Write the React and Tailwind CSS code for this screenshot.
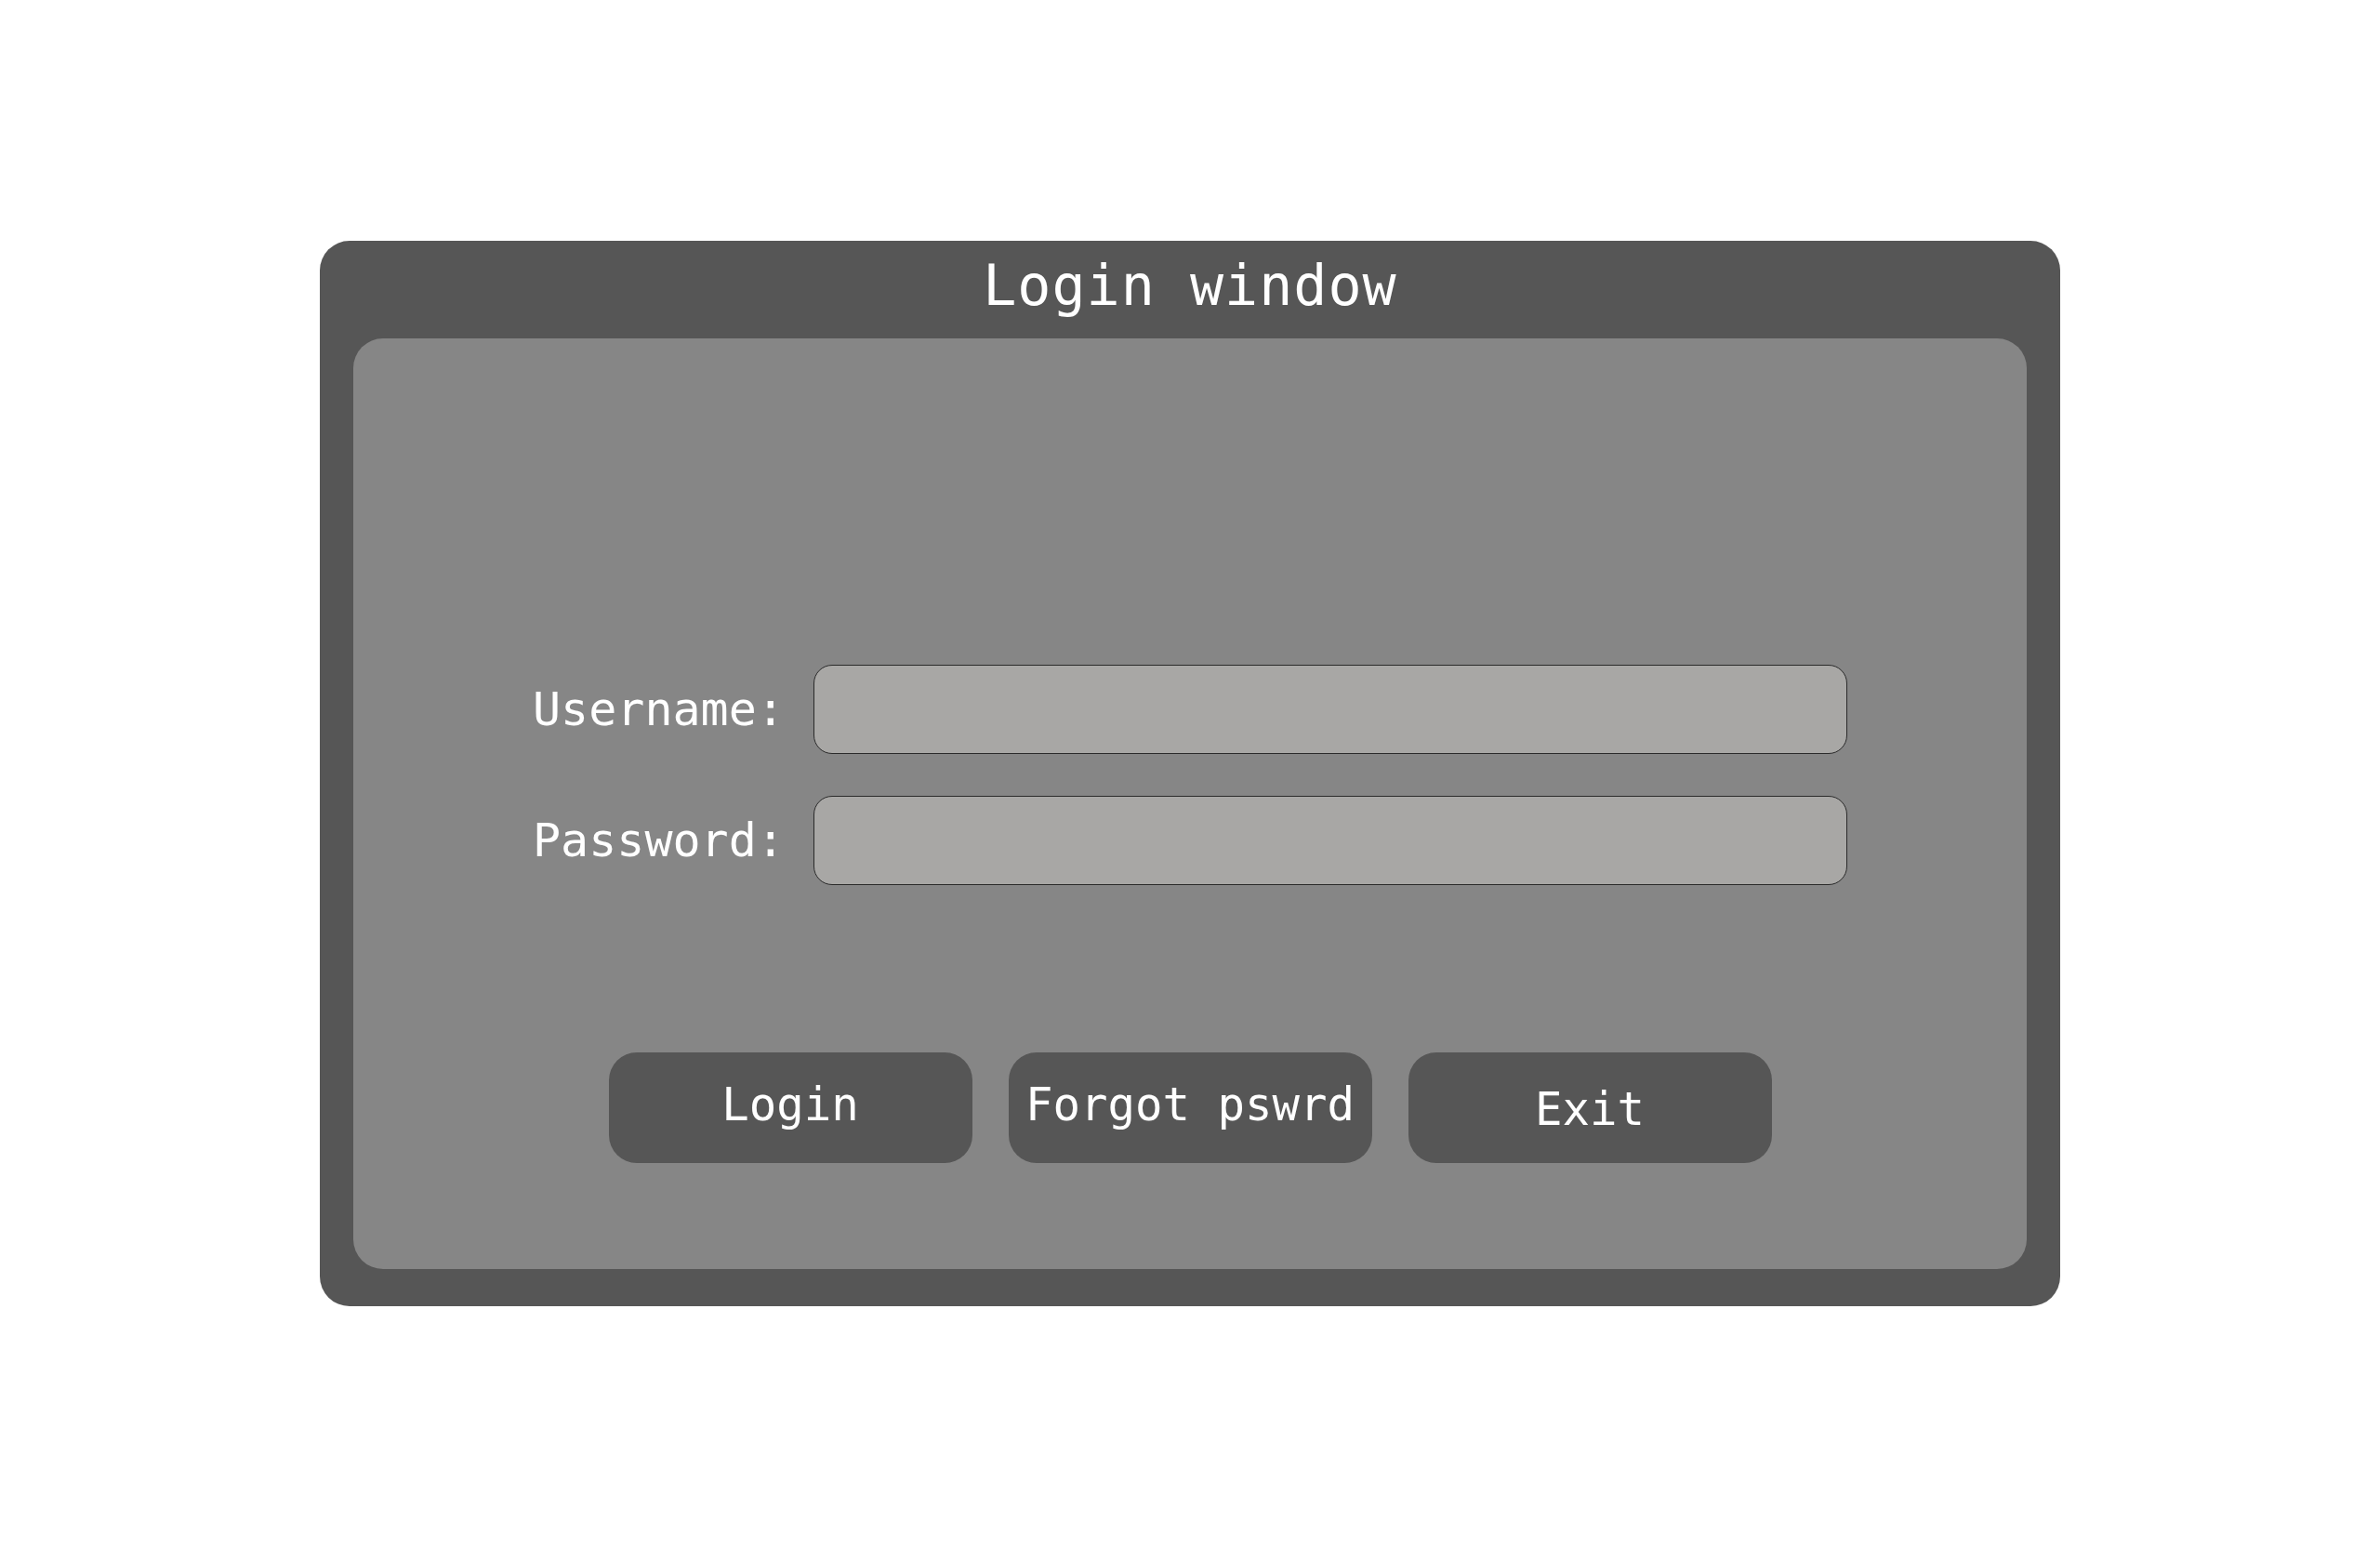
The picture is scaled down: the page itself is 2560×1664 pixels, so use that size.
import React from "react";

const fields = [
  { label: "Username:", type: "text" },
  { label: "Password:", type: "password" },
];

const buttons = [
  { label: "Login", pad: "pb-[6px]" },
  { label: "Forgot pswrd", pad: "pb-[6px]" },
  { label: "Exit", pad: "pt-[4px]" },
];

const App = () => {
  return (
    <div className="min-h-screen w-full bg-white flex items-center justify-center font-['DejaVu_Sans_Mono',monospace] text-white">
      <div className="w-[1872px] h-[1146px] rounded-[32px] bg-[#565656] px-[36px] pb-[40px] flex flex-col">
        {/* title bar */}
        <div className="h-[105px] shrink-0 flex items-center justify-center pb-[9px]">
          <h1 className="text-[60px] leading-none tracking-[1px] font-normal">Login window</h1>
        </div>

        <div className="flex-1 rounded-[32px] bg-[#868686] flex flex-col items-center pt-[351px]">
          <div className="flex flex-col gap-[45px]">
            {fields.map((field, index) => (
              <div key={index} className="flex items-center gap-[40px]">
                <label className="w-[262px] text-[50px] leading-none whitespace-nowrap">
                  {field.label}
                </label>
                <input
                  type={field.type}
                  className="w-[1112px] h-[96px] rounded-[20px] bg-[#a8a7a5] border border-[#2a2a2a] outline-none px-4 text-[40px] text-black"
                />
              </div>
            ))}
          </div>

          <div className="flex gap-[39px] mt-[180px]">
            {buttons.map((btn, index) => (
              <button
                key={index}
                className={`w-[391px] h-[119px] rounded-[30px] bg-[#565656] flex items-center justify-center text-[49px] leading-none whitespace-nowrap ${btn.pad}`}
              >
                {btn.label}
              </button>
            ))}
          </div>
        </div>
      </div>
    </div>
  );
};

export default App;
